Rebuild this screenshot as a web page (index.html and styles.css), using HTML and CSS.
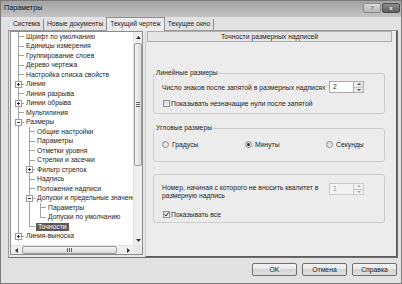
FILE: index.html
```html
<!DOCTYPE html>
<html lang="ru">
<head>
<meta charset="utf-8">
<title>Параметры</title>
<link rel="stylesheet" href="styles.css">
</head>
<body>
<div class="window">
  <div class="titlebar">
    <span class="title">Параметры</span>
    <div class="tb-buttons">
      <span class="tb-btn help">?</span>
      <span class="tb-btn close">x</span>
    </div>
  </div>
  <div class="main">
    <div class="tabs">
      <span class="tab">Система</span>
      <span class="tab prev">Новые документы</span>
      <span class="tab on">Текущий чертеж</span>
      <span class="tab">Текущее окно</span>
    </div>
    <div class="page">
      <div class="tree">
        <div class="tree-list">
          <div class="row"><span class="i t"></span><span class="lbl">Шрифт по умолчанию</span></div>
          <div class="row"><span class="i t"></span><span class="lbl">Единицы измерения</span></div>
          <div class="row"><span class="i t"></span><span class="lbl">Группирование слоев</span></div>
          <div class="row"><span class="i t"></span><span class="lbl">Дерево чертежа</span></div>
          <div class="row"><span class="i t"></span><span class="lbl">Настройка списка свойств</span></div>
          <div class="row"><span class="i t"><span class="box plus"></span></span><span class="lbl">Линии</span></div>
          <div class="row"><span class="i t"></span><span class="lbl">Линия разрыва</span></div>
          <div class="row"><span class="i t"><span class="box plus"></span></span><span class="lbl">Линии обрыва</span></div>
          <div class="row"><span class="i t"></span><span class="lbl">Мультилиния</span></div>
          <div class="row"><span class="i t"><span class="box"></span></span><span class="lbl">Размеры</span></div>
          <div class="row"><span class="i v"></span><span class="i t"></span><span class="lbl">Общие настройки</span></div>
          <div class="row"><span class="i v"></span><span class="i t"></span><span class="lbl">Параметры</span></div>
          <div class="row"><span class="i v"></span><span class="i t"></span><span class="lbl">Отметки уровня</span></div>
          <div class="row"><span class="i v"></span><span class="i t"></span><span class="lbl">Стрелки и засечки</span></div>
          <div class="row"><span class="i v"></span><span class="i t"><span class="box plus"></span></span><span class="lbl">Фильтр стрелок</span></div>
          <div class="row"><span class="i v"></span><span class="i t"></span><span class="lbl">Надпись</span></div>
          <div class="row"><span class="i v"></span><span class="i t"></span><span class="lbl">Положение надписи</span></div>
          <div class="row"><span class="i v"></span><span class="i t"><span class="box"></span></span><span class="lbl">Допуски и предельные значения</span></div>
          <div class="row"><span class="i v"></span><span class="i v"></span><span class="i t"></span><span class="lbl">Параметры</span></div>
          <div class="row"><span class="i v"></span><span class="i v"></span><span class="i l"></span><span class="lbl">Допуски по умолчанию</span></div>
          <div class="row"><span class="i v"></span><span class="i l"></span><span class="lbl sel">Точности</span></div>
          <div class="row"><span class="i t"><span class="box plus"></span></span><span class="lbl">Линия-выноска</span></div>
        </div>
        <div class="vscroll">
          <span class="sb-arrow"><svg width="5" height="3" viewBox="0 0 5 3"><path d="M0 3 L2.5 0 L5 3 Z" fill="#333"/></svg></span>
          <span class="vthumb"><span class="grip-h"></span></span>
          <span class="sb-arrow down"><svg width="5" height="3" viewBox="0 0 5 3"><path d="M0 0 L2.5 3 L5 0 Z" fill="#333"/></svg></span>
        </div>
        <div class="hscroll">
          <span class="sb-arrow"><svg width="3" height="5" viewBox="0 0 3 5"><path d="M3 0 L0 2.5 L3 5 Z" fill="#333"/></svg></span>
          <span class="hthumb"><span class="grip-v"></span></span>
          <span class="sb-arrow right"><svg width="3" height="5" viewBox="0 0 3 5"><path d="M0 0 L3 2.5 L0 5 Z" fill="#333"/></svg></span>
        </div>
        <div class="corner"></div>
      </div>
      <div class="panel">
        <div class="panel-head">Точности размерных надписей</div>
        <div class="groups">
          <div class="group g1">
            <div class="legend">Линейные размеры</div>
            <div class="frow">
              <span>Число знаков после запятой в размерных надписях</span>
              <span class="spin"><span class="spin-field">2</span><span class="spin-btns"><span class="sbt"><svg width="4" height="2" viewBox="0 0 4 2"><path d="M0 2 L2 0 L4 2 Z" fill="#555"/></svg></span><span class="sbt"><svg width="4" height="2" viewBox="0 0 4 2"><path d="M0 0 L2 2 L4 0 Z" fill="#555"/></svg></span></span></span>
            </div>
            <div class="crow"><span class="check"></span><span>Показывать незначащие нули после запятой</span></div>
          </div>
          <div class="group g2">
            <div class="legend">Угловые размеры</div>
            <div class="radios">
              <span class="ropt"><span class="radio"></span>Градусы</span>
              <span class="ropt"><span class="radio on"></span>Минуты</span>
              <span class="ropt"><span class="radio"></span>Секунды</span>
            </div>
          </div>
          <div class="group g3">
            <div class="frow top">
              <span class="wrap">Номер, начиная с которого не вносить квалитет в<br>размерную надпись</span>
              <span class="spin dis"><span class="spin-field">1</span><span class="spin-btns"><span class="sbt"><svg width="4" height="2" viewBox="0 0 4 2"><path d="M0 2 L2 0 L4 2 Z" fill="#aaa"/></svg></span><span class="sbt"><svg width="4" height="2" viewBox="0 0 4 2"><path d="M0 0 L2 2 L4 0 Z" fill="#aaa"/></svg></span></span></span>
            </div>
            <div class="crow c3"><span class="check on"><svg width="5" height="5" viewBox="0 0 5 5"><path d="M0.6 2.6 L2 4 L4.5 0.6" fill="none" stroke="#222" stroke-width="1"/></svg></span><span>Показывать все</span></div>
          </div>
        </div>
      </div>
    </div>
    <div class="buttons">
      <span class="btn">OK</span>
      <span class="btn">Отмена</span>
      <span class="btn">Справка</span>
    </div>
  </div>
</div>
</body>
</html>
```
FILE: styles.css
```css
* { box-sizing: border-box; }
html, body { margin: 0; padding: 0; }
body {
  width: 402px;
  height: 284px;
  overflow: hidden;
  font-family: "Liberation Sans", Arial, sans-serif;
  font-size: 6.8px;
  color: #1e1e1e;
}
.window {
  width: 402px;
  height: 284px;
  border: 1px solid #7a7a7a;
  background: #dedede;
  display: flex;
  flex-direction: column;
}
.titlebar {
  height: 16px;
  flex: none;
  display: flex;
  align-items: flex-start;
  background: linear-gradient(#a2a2a2, #c4c4c4);
}
.title {
  padding: 3px 0 0 3px;
  font-size: 7.2px;
  line-height: 8px;
  color: #111;
}
.tb-buttons {
  margin-left: auto;
  margin-right: 1px;
  margin-top: 2px;
  display: flex;
  gap: 1px;
}
.tb-btn {
  width: 18px;
  height: 10px;
  border-radius: 2px;
  text-align: center;
  font-size: 6px;
  line-height: 8px;
  font-weight: bold;
}
.tb-btn.help {
  border: 1px solid #8c8c8c;
  background: linear-gradient(#dadada, #b6b6b6);
  color: #777;
}
.tb-btn.close {
  border: 1px solid #4e4e4e;
  background: linear-gradient(#8a8a8a, #5e5e5e);
  color: #f0f0f0;
}
.main {
  flex: 1;
  display: flex;
  flex-direction: column;
  padding: 0 3px 0 7px;
  background: #e2e2e2;
}
.tabs {
  height: 13px;
  flex: none;
  display: flex;
  align-items: flex-end;
  padding-left: 2px;
}
.tab {
  height: 11px;
  line-height: 10px;
  padding: 0 3px;
  border-right: 1px solid #8e8e8e;
  white-space: nowrap;
  font-size: 6.7px;
}
.tab.prev { border-right: none; }
.tab.on {
  height: 14px;
  line-height: 12px;
  margin-bottom: -1px;
  padding: 0 3px;
  background: #ececec;
  border: 1px solid #8e8e8e;
  border-bottom: none;
  position: relative;
  z-index: 1;
}
.page {
  height: 228px;
  flex: none;
  display: flex;
  align-items: flex-start;
  gap: 2px;
  padding-left: 1px;
  border: 1px solid;
  border-color: #9a9a9a #6e6e6e #6e6e6e #9a9a9a;
  background: #e8e8e8;
}
.tree {
  width: 133px;
  height: 224px;
  border: 1px solid #8c8c8c;
  background: #fff;
  display: grid;
  grid-template-columns: 1fr 9px;
  grid-template-rows: 1fr 9px;
  overflow: hidden;
}
.tree-list {
  overflow: hidden;
  white-space: nowrap;
  padding-left: 2px;
}
.row {
  height: 9.5px;
  display: flex;
  align-items: stretch;
}
.i {
  width: 11px;
  flex: none;
  display: flex;
  align-items: center;
  padding-left: 2px;
}
.i.v {
  background: linear-gradient(#a3a3a3, #a3a3a3) 5px 0 / 1px 100% no-repeat;
}
.i.t {
  background:
    linear-gradient(#a3a3a3, #a3a3a3) 5px 0 / 1px 100% no-repeat,
    linear-gradient(#a3a3a3, #a3a3a3) 5px 50% / 6px 1px no-repeat;
}
.i.l {
  background:
    linear-gradient(#a3a3a3, #a3a3a3) 5px 0 / 1px 50% no-repeat,
    linear-gradient(#a3a3a3, #a3a3a3) 5px 50% / 6px 1px no-repeat;
}
.box {
  width: 7px;
  height: 7px;
  border: 1px solid #9a9a9a;
  background: linear-gradient(#333, #333) center / 3px 1px no-repeat, #fff;
}
.box.plus {
  background:
    linear-gradient(#333, #333) center / 3px 1px no-repeat,
    linear-gradient(#333, #333) center / 1px 3px no-repeat,
    #fff;
}
.lbl {
  align-self: center;
  line-height: 8px;
  margin-left: 1px;
  padding: 0 1px;
}
.lbl.sel {
  background: #595959;
  color: #fff;
  padding: 0 2px;
}
.vscroll {
  display: flex;
  flex-direction: column;
  background: #efefef;
  border-left: 1px solid #e2e2e2;
}
.sb-arrow {
  flex: none;
  height: 10px;
  display: flex;
  align-items: center;
  justify-content: center;
}
.sb-arrow.down { margin-top: auto; }
.vthumb {
  margin-top: 1px;
  height: 123px;
  border: 1px solid #9c9c9c;
  border-radius: 2px;
  background: linear-gradient(90deg, #f4f4f4, #dadada);
  display: flex;
  align-items: center;
  justify-content: center;
}
.grip-h {
  width: 4px;
  height: 5px;
  background: repeating-linear-gradient(#666 0 1px, transparent 1px 2px);
}
.hscroll {
  display: flex;
  background: #efefef;
  border-top: 1px solid #e2e2e2;
}
.hscroll .sb-arrow {
  width: 10px;
  height: auto;
}
.hscroll .sb-arrow.right { margin-left: auto; }
.hthumb {
  margin-left: 1px;
  width: 95px;
  border: 1px solid #9c9c9c;
  border-radius: 2px;
  background: linear-gradient(#f4f4f4, #dadada);
  display: flex;
  align-items: center;
  justify-content: center;
}
.grip-v {
  width: 5px;
  height: 4px;
  background: repeating-linear-gradient(90deg, #666 0 1px, transparent 1px 2px);
}
.corner { background: #e8e8e8; }
.panel {
  width: 252px;
  height: 226px;
  background: #ececec;
  border-left: 1px solid #cfcfcf;
  border-right: 1px solid #5c5c5c;
  border-bottom: 1px solid #5c5c5c;
}
.panel-head {
  height: 11px;
  margin: 0 4px 0 1px;
  border: 1px solid #adadad;
  background: #e5e5e5;
  text-align: center;
  line-height: 9px;
}
.groups {
  padding: 0 11px 0 7px;
}
.group {
  border: 1px solid #cdcdcd;
  border-radius: 3px;
  padding: 0 20px 0 8px;
}
.g1 { margin-top: 31px; padding-bottom: 5px; }
.g2 { margin-top: 14px; padding-bottom: 12px; }
.g3 { margin-top: 12px; padding-top: 8px; padding-bottom: 3px; }
.legend {
  width: fit-content;
  height: 8px;
  line-height: 8px;
  margin: -5px 0 0 -7px;
  padding: 0 1px;
  background: #ececec;
}
.frow {
  margin-top: 4px;
  height: 12px;
  display: flex;
  align-items: center;
  white-space: nowrap;
}
.frow.top {
  margin-top: 0;
  height: 17px;
  align-items: flex-start;
}
.wrap {
  margin-top: 1px;
  line-height: 8px;
}
.spin {
  margin-left: auto;
  height: 12px;
  display: flex;
}
.spin-field {
  width: 25px;
  height: 12px;
  border: 1px solid #a9a9a9;
  background: #fff;
  padding-left: 3px;
  line-height: 10px;
}
.spin-btns {
  width: 10px;
  display: flex;
  flex-direction: column;
  border: 1px solid #b2b2b2;
  border-left: none;
  background: linear-gradient(90deg, #f2f2f2, #dcdcdc);
}
.sbt {
  flex: 1;
  display: flex;
  align-items: center;
  justify-content: center;
}
.sbt + .sbt { border-top: 1px solid #c4c4c4; }
.spin.dis .spin-field {
  background: #f3f3f3;
  border-color: #cacaca;
  color: #9a9a9a;
}
.spin.dis .spin-btns {
  border-color: #cfcfcf;
  background: #f0f0f0;
}
.crow {
  margin-top: 5px;
  height: 10px;
  display: flex;
  align-items: center;
  gap: 1px;
  white-space: nowrap;
}
.crow.c3 { margin-top: 9px; }
.check {
  width: 7px;
  height: 7px;
  margin-left: 1px;
  border: 1px solid #8e8e8e;
  background: linear-gradient(135deg, #d6d6d6, #f6f6f6);
  display: flex;
  align-items: center;
  justify-content: center;
}
.radios {
  margin-top: 7px;
  height: 10px;
  display: grid;
  grid-template-columns: 83px 81px 1fr;
  align-items: center;
  white-space: nowrap;
}
.ropt {
  display: flex;
  align-items: center;
  gap: 3px;
}
.radio {
  width: 7px;
  height: 7px;
  border-radius: 50%;
  border: 1px solid #8e8e8e;
  background: linear-gradient(135deg, #d2d2d2, #f6f6f6);
  display: flex;
  align-items: center;
  justify-content: center;
}
.radio.on::after {
  content: "";
  width: 3px;
  height: 3px;
  border-radius: 50%;
  background: #333;
}
.buttons {
  margin-top: 5px;
  margin-right: 1px;
  display: flex;
  justify-content: flex-end;
  gap: 5px;
}
.btn {
  width: 45px;
  height: 13px;
  border: 1px solid #717171;
  border-radius: 2px;
  background: linear-gradient(#f5f5f5, #e6e6e6 50%, #d6d6d6 50%, #dedede);
  text-align: center;
  line-height: 11px;
}
```
